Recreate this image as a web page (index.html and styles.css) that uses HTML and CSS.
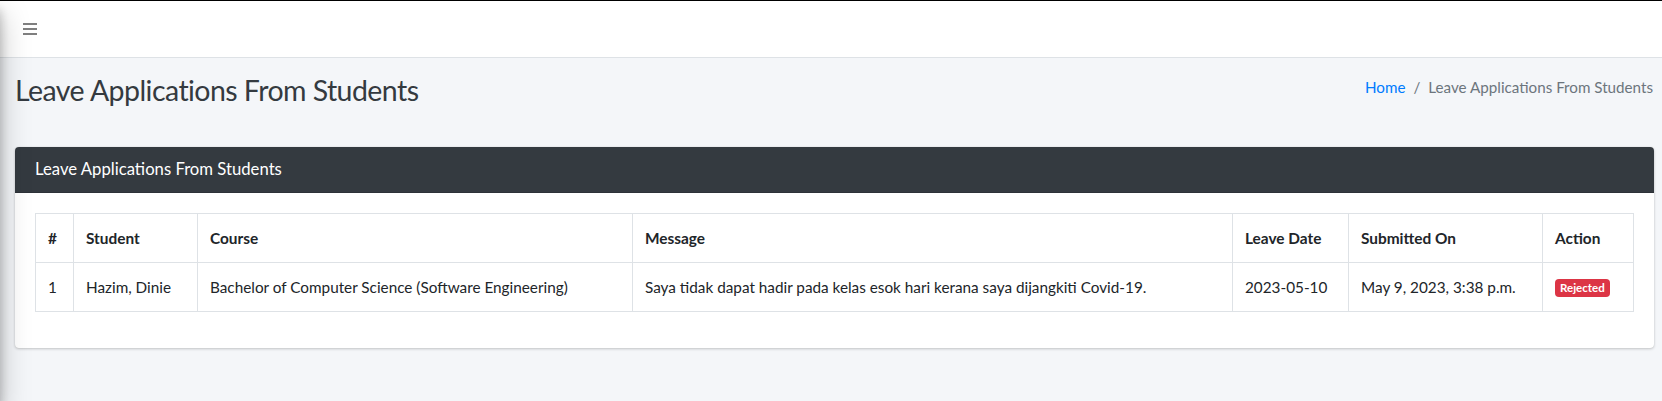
FILE: index.html
```html
<!DOCTYPE html>
<html lang="en">
<head>
<meta charset="utf-8">
<title>Leave Applications From Students</title>
<link rel="stylesheet" href="styles.css">
</head>
<body>
<div class="wrapper">
  <aside class="sidebar-shadow"></aside>
  <nav class="main-header">
    <a class="pushmenu" href="#" aria-label="Toggle menu">
      <svg width="14" height="12" viewBox="0 0 14 12" aria-hidden="true">
        <rect x="0" y="0" width="14" height="2" fill="#7f7f7f"/>
        <rect x="0" y="5" width="14" height="2" fill="#7f7f7f"/>
        <rect x="0" y="10" width="14" height="2" fill="#7f7f7f"/>
      </svg>
    </a>
  </nav>
  <div class="content-wrapper">
    <section class="content-header">
      <h1 class="page-title">Leave Applications From Students</h1>
      <ol class="breadcrumb">
        <li class="crumb"><a href="#" class="crumb-link">Home</a></li>
        <li class="crumb-sep">/</li>
        <li class="crumb active">Leave Applications From Students</li>
      </ol>
    </section>
    <section class="content">
      <div class="card">
        <div class="card-header">
          <h3 class="card-title">Leave Applications From Students</h3>
        </div>
        <div class="card-body">
          <table class="table">
            <colgroup>
              <col class="c-num">
              <col class="c-student">
              <col class="c-course">
              <col class="c-message">
              <col class="c-date">
              <col class="c-submitted">
              <col class="c-action">
            </colgroup>
            <thead>
              <tr>
                <th>#</th>
                <th>Student</th>
                <th>Course</th>
                <th>Message</th>
                <th>Leave Date</th>
                <th>Submitted On</th>
                <th>Action</th>
              </tr>
            </thead>
            <tbody>
              <tr>
                <td>1</td>
                <td>Hazim, Dinie</td>
                <td>Bachelor of Computer Science (Software Engineering)</td>
                <td>Saya tidak dapat hadir pada kelas esok hari kerana saya dijangkiti Covid-19.</td>
                <td>2023-05-10</td>
                <td>May 9, 2023, 3:38 p.m.</td>
                <td><span class="badge badge-danger">Rejected</span></td>
              </tr>
            </tbody>
          </table>
        </div>
      </div>
    </section>
  </div>
</div>
</body>
</html>
```

FILE: styles.css
```css
* { box-sizing: border-box; }

html, body {
  margin: 0;
  padding: 0;
}

body {
  font-family: "Lato", "Liberation Sans", sans-serif;
  font-size: 16px;
  line-height: 1.5;
  color: #212529;
  background: #f4f6f9;
  min-height: 401px;
  overflow: hidden;
}

.wrapper {
  min-height: 401px;
}

.sidebar-shadow {
  position: fixed;
  top: 0;
  left: -250px;
  width: 250px;
  height: 100vh;
  background: #343a40;
  box-shadow: 0 14px 28px rgba(0,0,0,.25), 0 10px 10px rgba(0,0,0,.22);
  z-index: 10;
}

.main-header {
  display: flex;
  align-items: center;
  height: 58px;
  background: #fff;
  border-top: 1px solid #000;
  border-bottom: 1px solid #dee2e6;
  padding-left: 23px;
}

.pushmenu {
  display: flex;
  line-height: 0;
}

.content-wrapper {
  background: #f4f6f9;
}

.content-header {
  display: flex;
  justify-content: space-between;
  align-items: flex-start;
  padding: 15px 9px 40px 15px;
}

.page-title {
  margin: 0;
  font-size: 28.5px;
  font-weight: 400;
  line-height: 34px;
  color: #343a40;
  letter-spacing: -0.55px;
}

.breadcrumb {
  display: flex;
  list-style: none;
  margin: 0;
  padding: 0;
  line-height: 28.8px;
  font-size: 15.2px;
}

.crumb-link {
  color: #007bff;
  text-decoration: none;
}

.crumb-sep {
  color: #6c757d;
  padding: 0 8px;
}

.crumb.active {
  color: #6c757d;
}

.content {
  padding: 0 8px 0 15px;
}

.card {
  background: #fff;
  border-radius: 4px;
  box-shadow: 0 0 1px rgba(0,0,0,.125), 0 1px 3px rgba(0,0,0,.2);
  margin-bottom: 16px;
}

.card-header {
  background: #343a40;
  color: #fff;
  padding: 12px 20px;
  border-bottom: 1px solid rgba(0,0,0,.125);
  border-radius: 4px 4px 0 0;
}

.card-title {
  margin: 0;
  font-size: 16.7px;
  font-weight: 400;
  line-height: 21px;
}

.card-body {
  padding: 20px;
}

.table {
  width: 100%;
  border-collapse: collapse;
  table-layout: fixed;
  margin-bottom: 16px;
  color: #212529;
}

.table th,
.table td {
  border: 1px solid #dee2e6;
  padding: 12px;
  text-align: left;
  vertical-align: top;
  line-height: 24px;
  white-space: nowrap;
}

.table th {
  font-weight: 700;
  font-size: 15.4px;
}

.table td {
  font-size: 15.3px;
}

.c-num { width: 38px; }
.c-student { width: 124px; }
.c-course { width: 435px; }
.c-message { width: 600px; }
.c-date { width: 116px; }
.c-submitted { width: 194px; }
.c-action { width: auto; }

.badge {
  display: inline-block;
  font-size: 11.5px;
  font-weight: 700;
  line-height: 1;
  padding: 3px 5px;
  border-radius: 4px;
  vertical-align: 1px;
}

.badge-danger {
  background: #dc3545;
  color: #fff;
}
```
